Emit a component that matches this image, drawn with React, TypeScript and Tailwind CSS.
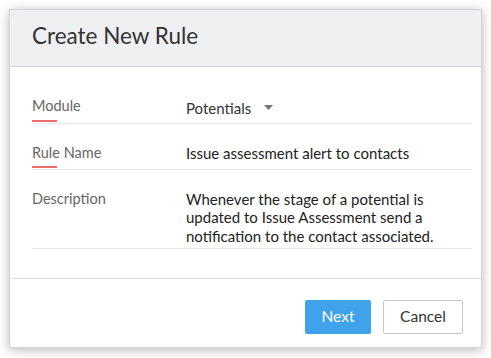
export default function App() {
  return (
    <div className="w-[491px] h-[358px] bg-white p-[9px] font-['Lato',sans-serif]">
      <div className="w-[473px] h-[339px] flex flex-col bg-white border border-[#d4d4d4] shadow-[0_2px_10px_rgba(0,0,0,0.28)]">
        {/* header */}
        <div className="h-[57px] shrink-0 flex items-center pl-[22px] pb-[5px] bg-[#eff0f2] border-b border-[#d6d6d6]">
          <h1 className="text-[22.5px] text-[#333]">Create New Rule</h1>
        </div>

        {/* body */}
        <div className="flex-1 pl-[22px] pr-[9px] pt-[11px]">
          {/* module */}
          <div className="flex h-[46px] border-b border-[#e8e8e8]">
            <div className="w-[154px] flex flex-col pt-[19px]">
              <span className="block text-[14.5px] text-[#666] leading-[18px]">Module</span>
              <span className="mt-auto w-[25px] h-[2px] bg-[#f26d6d] mb-[1px]" />
            </div>
            <div className="flex items-start pt-[21px] text-[15px] text-[#333] leading-[18px]">
              Potentials
              <svg className="ml-[13px] mt-[6px]" width="9" height="5" viewBox="0 0 9 5">
                <path d="M0 0h9L4.5 5z" fill="#777" />
              </svg>
            </div>
          </div>

          {/* rule name */}
          <div className="flex h-[46px] border-b border-[#e8e8e8]">
            <div className="w-[154px] flex flex-col pt-[20px]">
              <span className="block text-[14.5px] text-[#666] leading-[18px]">Rule Name</span>
              <span className="mt-auto w-[25px] h-[2px] bg-[#f26d6d] mb-[1px]" />
            </div>
            <div className="pt-[20px] text-[15px] text-[#222] leading-[18px]">
              Issue assessment alert to contacts
            </div>
          </div>

          {/* description */}
          <div className="flex h-[79px] border-b border-[#e8e8e8]">
            <div className="w-[154px] pt-[20px]">
              <span className="block text-[14.5px] text-[#666] leading-[18px]">Description</span>
            </div>
            <div className="pt-[20px] w-[270px] text-[15px] text-[#222] leading-[18.3px]">
              Whenever the stage of a potential is<br />
              updated to Issue Assessment send a<br />
              notification to the contact associated.
            </div>
          </div>
        </div>

        {/* footer */}
        <div className="h-[69px] shrink-0 flex justify-end items-start gap-[12px] pt-[21px] pr-[18px] border-t border-[#dcdcdc]">
          <button className="w-[66px] h-[34px] rounded-[2px] bg-[#41a2ec] text-white text-[15.5px]">Next</button>
          <button className="w-[80px] h-[34px] rounded-[2px] bg-white border border-[#c8c8c8] text-[#333] text-[15.5px]">Cancel</button>
        </div>
      </div>
    </div>
  );
}
